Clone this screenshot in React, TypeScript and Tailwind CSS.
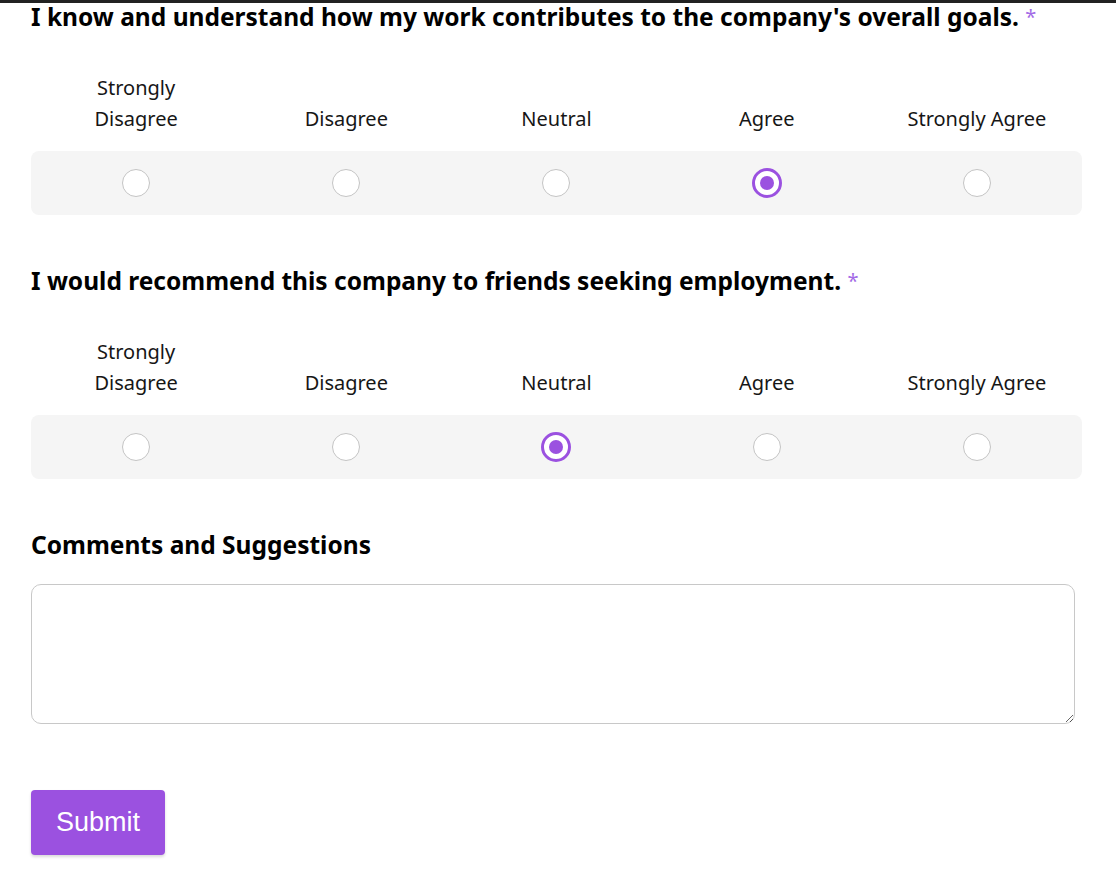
import React, { useState } from 'react';

const options = ['Strongly Disagree', 'Disagree', 'Neutral', 'Agree', 'Strongly Agree'];

function LikertQuestion({ title, initial, name }: { title: string; initial: number; name: string }) {
  const [value, setValue] = useState(initial);

  return (
    <div className="mb-[52px]">
      <h2 className="text-[24.5px] leading-[28px] font-bold text-black mb-[41px]">
        {title} <span className="text-[#a36be6] text-[20px] font-normal align-top">*</span>
      </h2>

      {/* Labels */}
      <div className="grid grid-cols-5 items-end h-[62px] mb-[17px]">
        {options.map((opt) => (
          <div key={opt} className="text-center text-[20px] leading-[31px] text-[#161616]">
            {opt === 'Strongly Disagree' ? (
              <>
                Strongly
                <br />
                Disagree
              </>
            ) : (
              <span className="whitespace-nowrap">{opt}</span>
            )}
          </div>
        ))}
      </div>

      {/* Radios */}
      <div className="grid grid-cols-5 items-center h-[64px] rounded-lg bg-[#f5f5f5]">
        {options.map((opt, i) => (
          <label key={opt} className="flex justify-center cursor-pointer">
            <input
              type="radio"
              name={name}
              className="sr-only"
              checked={value === i}
              onChange={() => setValue(i)}
            />
            {value === i ? (
              <span className="flex items-center justify-center w-[30px] h-[30px] rounded-full border-[3px] border-[#9b51e0] bg-white">
                <span className="w-[14px] h-[14px] rounded-full bg-[#9b51e0]" />
              </span>
            ) : (
              <span className="w-[28px] h-[28px] rounded-full border border-[#c4c4c4] bg-white" />
            )}
          </label>
        ))}
      </div>
    </div>
  );
}

export default function App() {
  return (
    <div className="min-h-screen bg-white font-['Noto_Sans',sans-serif]">
      <div className="h-[3px] bg-[#222]" />

      <form className="pl-[31px] pr-[34px]" onSubmit={(e) => e.preventDefault()}>
        <LikertQuestion
          name="q1"
          initial={3}
          title="I know and understand how my work contributes to the company's overall goals."
        />
        <LikertQuestion
          name="q2"
          initial={2}
          title="I would recommend this company to friends seeking employment."
        />

        {/* Comments */}
        <h2 className="text-[24.5px] leading-[28px] font-bold text-black mb-[25px]">Comments and Suggestions</h2>
        <textarea className="block w-[1044px] h-[140px] rounded-[10px] border border-[#c8c8c8] px-3 py-2 text-[18px] outline-none mb-[66px]" />

        <button
          type="submit"
          className="w-[134px] h-[65px] rounded-[4px] bg-[#9b51e0] text-white text-[27px] font-['Liberation_Sans',Arial,sans-serif] shadow-[0_2px_3px_rgba(0,0,0,0.15)]"
        >
          Submit
        </button>
      </form>
    </div>
  );
}
